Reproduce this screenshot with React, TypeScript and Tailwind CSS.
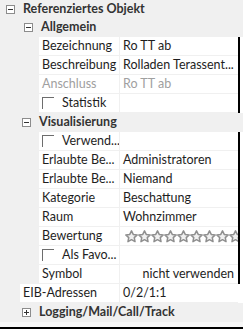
import React from 'react'

const font = { fontFamily: 'Lato, "Open Sans", sans-serif' }

const Toggle = ({ open }: { open: boolean }) => (
  <svg width="9" height="9" viewBox="0 0 9 9" className="shrink-0">
    <rect x="0.5" y="0.5" width="8" height="8" fill="#fff" stroke="#8c8c8c" />
    <path d="M2 4.5h5" stroke="#333" />
    {!open && <path d="M4.5 2v5" stroke="#333" />}
  </svg>
)

const Check = () => (
  <div className="h-[12px] w-[12px] shrink-0 border-l border-t border-[#6d6d6d] bg-white" />
)

const Star = () => (
  <svg width="13" height="13" viewBox="0 0 24 24" className="shrink-0">
    <path
      d="M12 1.5l3.2 6.7 7.3.9-5.4 5 1.4 7.3L12 17.8l-6.5 3.6 1.4-7.3-5.4-5 7.3-.9z"
      fill="#f0f0f0"
      stroke="#8f8f8f"
      strokeWidth="2.8"
      strokeLinejoin="round"
    />
  </svg>
)

const Header = ({ indent, label, open = true, h = 'h-[19px]' }: { indent: number; label: string; open?: boolean; h?: string }) => (
  <div className={`flex ${h} items-center bg-[#f0f0f0]`} style={{ paddingLeft: indent }}>
    <Toggle open={open} />
    <span className="pl-[8px] text-[12.5px] font-bold text-[#333]">{label}</span>
  </div>
)

type RowProps = {
  indent?: number
  label: React.ReactNode
  value?: React.ReactNode
  disabled?: boolean
  edge?: boolean
}

const Row = ({ indent = 40, label, value, disabled, edge = true }: RowProps) => (
  <div className="flex h-[19px] bg-[#f0f0f0]">
    <div className="shrink-0" style={{ width: indent - 1 }} />
    <div
      className={`flex flex-1 items-center overflow-hidden whitespace-nowrap border-b border-r border-[#f0f0f0] bg-white pl-[3px] text-[12.5px] ${
        disabled ? 'text-[#a0a0a0]' : 'text-[#1e1e1e]'
      }`}
    >
      {label}
    </div>
    <div
      className={`flex w-[118px] shrink-0 items-center overflow-hidden whitespace-nowrap border-b border-[#f0f0f0] bg-white pl-[3px] text-[12.5px] ${
        disabled ? 'text-[#a0a0a0]' : 'text-[#1e1e1e]'
      }`}
    >
      {value}
    </div>
    <div className={`w-[2px] shrink-0 ${edge ? 'bg-black' : 'bg-white'}`} />
    <div className="w-[3px] shrink-0 bg-white" />
  </div>
)

const CheckLabel = ({ text }: { text: string }) => (
  <span className="flex items-center gap-[8px]">
    <Check />
    {text}
  </span>
)

export default function App() {
  return (
    <div className="h-[330px] w-[243px] overflow-hidden bg-white" style={font}>
      <div className="flex flex-col">
        <Header indent={6} label="Referenziertes Objekt" h="h-[18px]" />
        <Header indent={24} label="Allgemein" />
        <Row label="Bezeichnung" value="Ro TT ab" />
        <Row label="Beschreibung" value="Rolladen Terassent..." />
        <Row label="Anschluss" value="Ro TT ab" disabled />
        <Row label={<CheckLabel text="Statistik" />} />
        <Header indent={22} label="Visualisierung" />
        <Row label={<CheckLabel text="Verwend..." />} />
        <Row label="Erlaubte Be..." value="Administratoren" />
        <Row label="Erlaubte Be..." value="Niemand" />
        <Row label="Kategorie" value="Beschattung" />
        <Row label="Raum" value="Wohnzimmer" />
        <Row
          label="Bewertung"
          value={
            <span className="flex pl-[2px]">
              {Array.from({ length: 10 }).map((_, i) => (
                <Star key={i} />
              ))}
            </span>
          }
        />
        <Row label={<CheckLabel text="Als Favo..." />} />
        <Row label="Symbol" value={<span className="w-full pr-[4px] text-right">nicht verwenden</span>} />
        <Row indent={21} label="EIB-Adressen" value="0/2/1:1" edge={false} />
        <Header indent={22} label="Logging/Mail/Call/Track" open={false} />
      </div>
      <div className="h-[5px] bg-[#f7f7f7]" />
      <div className="h-[2px] bg-black" />
    </div>
  )
}
